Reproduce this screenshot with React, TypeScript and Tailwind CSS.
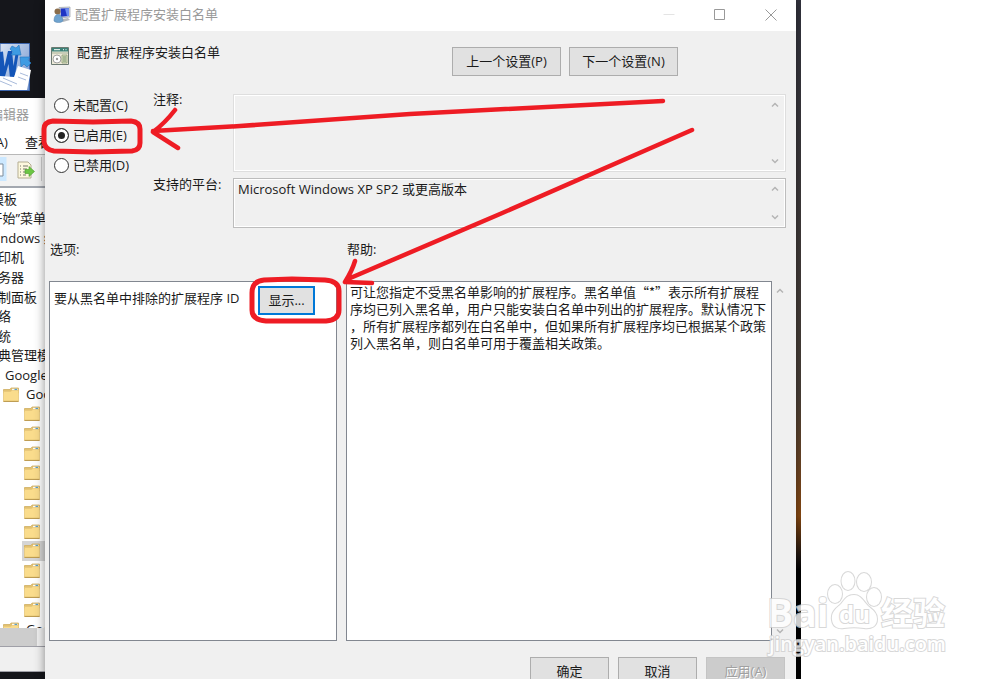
import React, { useState } from 'react';

const helpText = [
  '可让您指定不受黑名单影响的扩展程序。黑名单值“*”表示所有扩展程',
  '序均已列入黑名单，用户只能安装白名单中列出的扩展程序。默认情况下',
  '，所有扩展程序都列在白名单中，但如果所有扩展程序均已根据某个政策',
  '列入黑名单，则白名单可用于覆盖相关政策。',
].join('\n');

const treeItems = [
  '“开始”菜单',
  'Windows 组件',
  '打印机',
  '服务器',
  '控制面板',
  '网络',
  '系统',
  '经典管理模板',
];

const states = [
  { id: 'unset', label: '未配置(C)' },
  { id: 'enabled', label: '已启用(E)' },
  { id: 'disabled', label: '已禁用(D)' },
];

const FolderIcon: React.FC = () => (
  <svg viewBox="0 0 16 15" className="h-[15px] w-4 shrink-0">
    <path d="M.5 2.5h6.5l1-1.5h7.5v5H.5z" fill="#e3c170" stroke="#cfae62" strokeWidth=".8" />
    <path d="M9 1.8h5.5v2H9z" fill="#fff" />
    <path d="M11.5 1.8h2.5v1.4h-2.5z" fill="#4d9bd0" />
    <path d="M.5 4.5h7L9 3.4h6.5v11H.5z" fill="#fadc8c" stroke="#e6c67a" strokeWidth=".8" />
    <path d="M.5 14.4h15" stroke="#b9984e" />
  </svg>
);

const Chevron: React.FC<{ up?: boolean }> = ({ up }) => (
  <svg viewBox="0 0 8 6" className="h-[6px] w-2" fill="none" stroke="#b4b4b4" strokeWidth="1.5">
    <path d={up ? 'M1 4.5 4 1.5l3 3' : 'M1 1.5l3 3 3-3'} />
  </svg>
);

const ScrollArrows: React.FC<{ name: string; className: string }> = ({ name, className }) => (
  <div className={`flex shrink-0 flex-col items-center justify-between py-1 ${className}`}>
    <button aria-label={`${name} ▲`} className="flex h-3 items-center"><Chevron up /></button>
    <button aria-label={`${name} ▼`} className="flex h-3 items-center"><Chevron /></button>
  </div>
);

const PushButton: React.FC<{ className: string; disabled?: boolean; children: React.ReactNode }> = ({ className, disabled, children }) => (
  <button disabled={disabled} className={`flex h-[29px] items-center justify-center pb-0.5 ${className}`}>
    {children}
  </button>
);

/* Group policy editor, mostly hidden behind the dialog */
const EditorWindow: React.FC = () => (
  <div className="flex w-[45px] shrink-0 flex-col overflow-hidden bg-[#15161b]">
    <div className="h-[98px] shrink-0 pt-[43px]">
      <svg viewBox="0 0 31 48" className="h-12 w-[31px]">
        <defs>
          <linearGradient id="word" x1="0" y1="0" x2="1" y2="1">
            <stop offset="0" stopColor="#dbe6f5" />
            <stop offset="1" stopColor="#6d8fcb" />
          </linearGradient>
        </defs>
        <path d="M0 .5h29.5v47H0z" fill="url(#word)" stroke="#3b64ac" />
        <path d="M0 9l3-.5 1.500 15L8 8h4l1.500 15L16 8h3l-4.500 27H10L8.500 21 4.500 35H0z" fill="#1455b8" />
        <path d="M18 23l13 4-4 20H0V33l14 1z" fill="#fff" />
        <path d="M0 38l12 5M3 35l14 6M20 30l8 3M18 34l8 3" stroke="#a9bbdb" strokeWidth="1" />
        <path d="M12 3l4 2 3-3 2 10-10 0 2-3-3-3zM20 14l10 0-2 3 3 3-4 4-3-3-3 3z" fill="#3e9be3" stroke="#2374bd" strokeWidth=".6" />
      </svg>
    </div>
    <div className="flex h-8 shrink-0 items-center bg-white text-[#999]">
      <span className="-ml-[23px] whitespace-nowrap">略编辑器</span>
    </div>
    <div className="flex h-[25px] shrink-0 items-center justify-between border-b border-[#b8b8b8] bg-white">
      <span className="-ml-[34px] whitespace-nowrap">操作(A)</span>
      <span className="-mr-[6px] whitespace-nowrap">查看</span>
    </div>
    <div className="flex h-[33px] shrink-0 items-start gap-2.5 border-b-2 border-[#a3a8b0] bg-[#f2f2f2] pt-0.5">
      <svg viewBox="0 0 7 24" className="h-6 w-[7px]">
        <path d="M0 0h6.5v24H0z" fill="#cce8ff" />
        <path d="M0 7h3v12H0" fill="#fff" stroke="#7d8a99" />
      </svg>
      <svg viewBox="0 0 18 18" className="mt-1 h-[18px] w-[18px]">
        <path d="M1 1h10l3 3v13H1z" fill="#fdf8de" stroke="#b5ad92" />
        <path d="M3 5h1M3 8h1M3 11h1M3 14h1M6 5h5M6 8h4M6 11h3M6 14h3" stroke="#77776c" />
        <path d="M8 8.5h4V5.500l5.500 5-5.500 5v-3H8z" fill="#6cc644" stroke="#4a9b2b" strokeWidth=".6" />
      </svg>
      <span className="-ml-1 h-6 w-px bg-[#ccc]" />
    </div>
    <div className="min-h-0 flex-1 overflow-hidden bg-white">
      <ul className="-ml-[15px] mt-px grid h-[450px] auto-rows-fr whitespace-nowrap">
        <li className="-ml-5 flex items-center">管理模板</li>
        {treeItems.map((item) => (
          <li key={item} className="flex items-center">{item}</li>
        ))}
        <li className="flex items-center pl-5">Google</li>
        <li className="flex items-center gap-[7px] pl-[18px]"><FolderIcon />Google</li>
        {Array.from({ length: 11 }, (_, i) => (
          <li key={i} className="flex items-center pl-[37px]">
            <span className={i === 7 ? 'flex h-full flex-1 items-center bg-[#d5d5d5] pl-0.5' : 'flex pl-0.5'}><FolderIcon /></span>
          </li>
        ))}
        <li className="flex items-center gap-[7px] pl-[18px]"><FolderIcon />Google</li>
      </ul>
    </div>
    <div className="h-[18px] shrink-0 bg-[#f0f0f0]"><div className="h-full w-[37px] bg-[#cdcdcd]" /></div>
    <div className="h-[26px] shrink-0 border-y border-[#a0a0a8] bg-[#f0f0f0]" />
    <div className="h-[7px] shrink-0" />
  </div>
);

const TitleBar: React.FC = () => (
  <header className="flex h-[31px] items-center bg-white pb-0.5 pl-2 text-[#999]">
    <svg viewBox="0 0 18 18" className="mr-1 h-[18px] w-[18px]">
      <path d="M6 1.500l11-.5v10l-10 1z" fill="#d7dbe0" stroke="#999fa8" strokeWidth=".7" />
      <path d="M7.500 2.500l8.500-.3v7.800l-8 .7z" fill="#1f35c4" />
      <path d="M12 2.400l4-.2v7.800l-2 .2z" fill="#6c8df0" />
      <path d="M9 13l6-1 2 2-7 2z" fill="#b4b8bd" />
      <circle cx="4.500" cy="5.500" r="3" fill="#8a6d4b" />
      <path d="M1 15c0-5 2-6.500 4-6.500S9.500 10 10 15c-2 2-7 2-9 0z" fill="#6fa3cf" stroke="#4c7ba5" strokeWidth=".5" />
    </svg>
    <h1 className="pb-0.5">配置扩展程序安装白名单</h1>
    <div className="ml-auto flex h-full">
      <button aria-label="最小化" className="flex w-[51px] items-center justify-center">
        <svg viewBox="0 0 12 12" className="h-3 w-3" stroke="#e4e4e4"><path d="M.5 5.500h11" /></svg>
      </button>
      <button aria-label="最大化" className="flex w-[51px] items-center justify-center">
        <svg viewBox="0 0 12 12" className="h-3 w-3" fill="none" stroke="#999"><path d="M.5.5h10v10H.5z" /></svg>
      </button>
      <button aria-label="关闭" className="flex w-[51px] items-center justify-center">
        <svg viewBox="0 0 12 12" className="h-3 w-3" stroke="#999"><path d="M.5.5l11 11M11.500.5l-11 11" /></svg>
      </button>
    </div>
  </header>
);

const PolicyDialog: React.FC = () => {
  const [state, setState] = useState('enabled');

  return (
    <main className="z-10 min-w-0 flex-1 bg-[#f0f0f0] shadow-[0_0_10px_rgba(0,0,0,0.45)]">
      <TitleBar />

      {/* Setting name and navigation */}
      <div className="flex items-start justify-between pl-1.5 pr-[118px] pt-4">
        <div className="flex items-start gap-2">
          <svg viewBox="0 0 18 18" className="h-[18px] w-[18px]">
            <path d="M.5.5h17v17H.5z" fill="#ece9d8" stroke="#6b7a72" />
            <path d="M1 1h16v3.500H1z" fill="#3d8278" />
            <path d="M3 2.700h6M12 2.700h1M14.500 2.700h1" stroke="#fff" />
            <path d="M1 5h16v2H1z" fill="#c9cdb8" />
            <circle cx="6" cy="12" r="4" fill="#fff" stroke="#a0a0a0" />
            <circle cx="6" cy="12" r="1.200" fill="#999" />
            <path d="M11 8h5v8h-5z" fill="#cfe0c0" stroke="#89936c" strokeWidth=".7" />
            <path d="M12 10h3M12 12h3M12 14h3" stroke="#6c7a57" strokeWidth=".8" />
          </svg>
          <h2 className="leading-[10px]">配置扩展程序安装白名单</h2>
        </div>
        <div className="flex gap-2">
          <PushButton className="w-[109px] border border-[#adadad] bg-[#e1e1e1]">上一个设置(P)</PushButton>
          <PushButton className="w-[109px] border border-[#adadad] bg-[#e1e1e1]">下一个设置(N)</PushButton>
        </div>
      </div>

      {/* State, comment and supported platforms */}
      <div className="flex pl-[9px] pr-2.5 pt-[18px]">
        <fieldset className="flex w-[99px] flex-col">
          {states.map((s) => (
            <label key={s.id} className="flex h-[30px] items-center gap-1 pb-2">
              <input
                type="radio"
                name="state"
                checked={state === s.id}
                onChange={() => setState(s.id)}
                className="size-[15px] appearance-none rounded-full border border-[#333] bg-white checked:bg-[#222] checked:shadow-[inset_0_0_0_3px_white]"
              />
              {s.label}
            </label>
          ))}
        </fieldset>
        <div className="flex flex-1 flex-col gap-1.5">
          <div className="flex">
            <label htmlFor="comment" className="w-20 leading-[10px]">注释:</label>
            <div className="flex h-[78px] flex-1 border border-[#dedede] outline-1 -outline-offset-2 outline-white">
              <textarea id="comment" className="flex-1 resize-none px-1" />
              <ScrollArrows name="注释" className="w-5" />
            </div>
          </div>
          <div className="flex">
            <label htmlFor="platform" className="w-20 leading-3">支持的平台:</label>
            <div className="flex h-[50px] flex-1 border border-[#bdbdbd] outline-1 -outline-offset-2 outline-white">
              <textarea id="platform" readOnly value="Microsoft Windows XP SP2 或更高版本" className="flex-1 resize-none px-1 py-0.5" />
              <ScrollArrows name="支持的平台" className="w-5" />
            </div>
          </div>
        </div>
      </div>

      {/* Options and help */}
      <div className="flex gap-[9px] pl-1 pr-2 pt-[13px]">
        <section className="w-[288px] shrink-0">
          <h3 className="h-10 pl-px">选项:</h3>
          <div className="h-[360px] border border-[#828790] bg-white p-1">
            <div className="flex w-[261px] items-start justify-between">
              <span className="pt-1">要从黑名单中排除的扩展程序 ID</span>
              <PushButton className="w-[57px] border-2 border-[#0078d7] bg-[#e1e1e1]">显示...</PushButton>
            </div>
          </div>
        </section>
        <section className="flex-1">
          <label htmlFor="help" className="block h-10 pl-px">帮助:</label>
          <div className="flex h-[360px]">
            <textarea
              id="help"
              readOnly
              value={helpText}
              className="flex-1 resize-none overflow-hidden border border-[#828790] bg-white py-px pl-[3px] font-['Noto_Sans_CJK_SC',sans-serif] leading-[17px]"
            />
            <ScrollArrows name="帮助" className="w-4" />
          </div>
        </section>
      </div>

      <div className="flex justify-end gap-[9px] pr-[11px] pt-4">
        <PushButton className="w-[79px] border border-[#adadad] bg-[#e1e1e1]">确定</PushButton>
        <PushButton className="w-[79px] border border-[#adadad] bg-[#e1e1e1]">取消</PushButton>
        <PushButton disabled className="w-[79px] border border-[#c4c4c4] bg-[#cccccc] text-[#a0a0a0] text-shadow-[1px_1px_0_white]">应用(A)</PushButton>
      </div>
    </main>
  );
};

/* Red pen marks over the dialog */
const PenMarks: React.FC = () => (
  <svg
    viewBox="0 0 1000 679"
    className="pointer-events-none absolute left-0 top-0 z-20 h-[679px] w-[1000px]"
    fill="none"
    stroke="#ee1c24"
    strokeWidth="5"
    strokeLinecap="round"
    strokeLinejoin="round"
  >
    <path d="M53 121l40 1 38-1q9 1 9 8v14q0 7-8 8l-40 1-38-1q-9-1-10-9v-13q0-7 9-8z" />
    <path d="M264 280l28-1 33 1q14 1 14 11v19q0 10-13 11h-60q-14-1-14-11v-17q0-12 12-13z" />
    <path d="M663 101L410 114 240 126 153 131M175 110q-10 13-22 22l25 16" strokeWidth="4.500" />
    <path d="M692 130L500 214 348 279M355 261q-3 10-10 21l27 1" strokeWidth="4.500" />
  </svg>
);

const Watermark: React.FC = () => (
  <svg viewBox="0 0 182 90" className="pointer-events-none absolute left-[766px] top-[569px] z-20 h-[90px] w-[182px]" fill="#fff" opacity=".8" stroke="#cfcfcf" strokeWidth="2" paintOrder="stroke">
    <text x="1" y="58" fontSize="39" fontWeight="700" className="font-['Open_Sans',sans-serif]">Bai</text>
    <ellipse cx="69" cy="25" rx="7" ry="9" />
    <ellipse cx="82" cy="12" rx="6.500" ry="9" />
    <ellipse cx="98" cy="13" rx="7" ry="9" />
    <ellipse cx="108" cy="28" rx="7" ry="9" />
    <path d="M88 26c-8 0-10 6-14 10-5 4-9 8-8 15 1 7 6 9 12 8 7-1 13-1 20 0 8 1 13-2 13-9 0-6-4-9-9-13-5-5-7-11-14-11z" />
    <text x="73" y="54" fontSize="24" fontWeight="700" className="font-['Open_Sans',sans-serif]">du</text>
    <text x="115" y="56" fontSize="32" fontWeight="700" className="font-['Noto_Sans_CJK_SC',sans-serif]">经验</text>
    <text x="3" y="82" fontSize="20" fontWeight="600" className="font-['Open_Sans',sans-serif]">jingyan.baidu.com</text>
  </svg>
);

const App: React.FC = () => (
  <div className="relative flex h-screen overflow-hidden bg-white font-['Open_Sans','Noto_Sans_CJK_SC',sans-serif] text-[13px] leading-4 text-[#1a1a1a]">
    <EditorWindow />
    <PolicyDialog />
    <div className="w-[5px] shrink-0 bg-[linear-gradient(#33343f,#4a4038_58%,#6b4526_68%,#8a4a12_76%,#1c1410_82%,#000_84%)]" />
    <div className="z-10 w-[199px] shrink-0 bg-white" />
    <PenMarks />
    <Watermark />
  </div>
);

export default App;
